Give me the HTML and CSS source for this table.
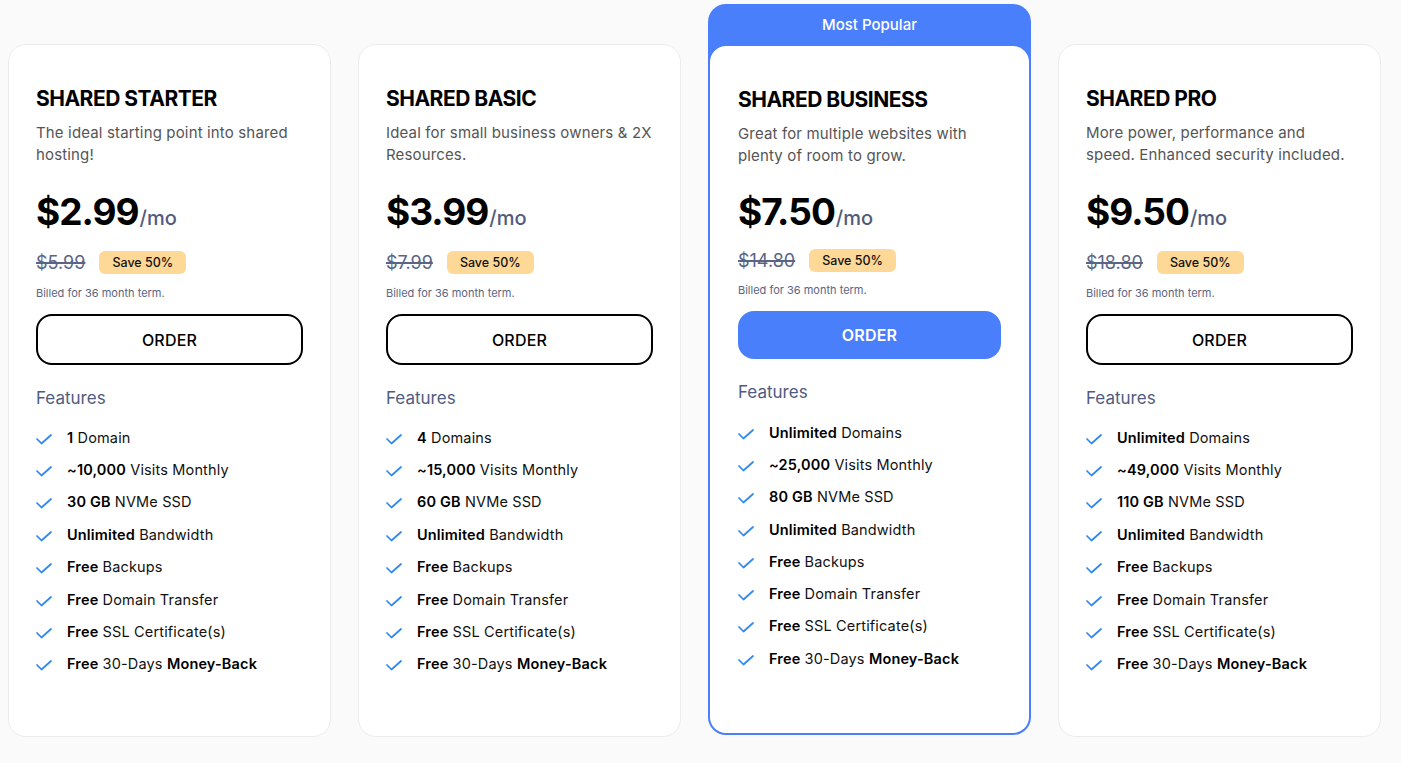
FILE: index.html
```html
<!DOCTYPE html>
<html>
<head>
<meta charset="utf-8">
<link rel="stylesheet" href="styles.css">
</head>
<body>
<div class="plans">
  <div class="card">
    <h2 class="title">SHARED STARTER</h2>
    <p class="desc">The ideal starting point into shared hosting!</p>
    <div class="price"><span class="amount">$2.99</span><span class="per">/mo</span></div>
    <div class="save-row"><span class="old">$5.99</span><span class="badge">Save 50%</span></div>
    <p class="billed">Billed for 36 month term.</p>
    <button class="order">ORDER</button>
    <h3 class="features-title">Features</h3>
    <ul class="features">
      <li><svg class="check" viewBox="0 0 16 11"><polyline points="1,5 5.5,9.5 15,1"/></svg><span><b>1</b> Domain</span></li>
      <li><svg class="check" viewBox="0 0 16 11"><polyline points="1,5 5.5,9.5 15,1"/></svg><span><b>~10,000</b> Visits Monthly</span></li>
      <li><svg class="check" viewBox="0 0 16 11"><polyline points="1,5 5.5,9.5 15,1"/></svg><span><b>30 GB</b> NVMe SSD</span></li>
      <li><svg class="check" viewBox="0 0 16 11"><polyline points="1,5 5.5,9.5 15,1"/></svg><span><b>Unlimited</b> Bandwidth</span></li>
      <li><svg class="check" viewBox="0 0 16 11"><polyline points="1,5 5.5,9.5 15,1"/></svg><span><b>Free</b> Backups</span></li>
      <li><svg class="check" viewBox="0 0 16 11"><polyline points="1,5 5.5,9.5 15,1"/></svg><span><b>Free</b> Domain Transfer</span></li>
      <li><svg class="check" viewBox="0 0 16 11"><polyline points="1,5 5.5,9.5 15,1"/></svg><span><b>Free</b> SSL Certificate(s)</span></li>
      <li><svg class="check" viewBox="0 0 16 11"><polyline points="1,5 5.5,9.5 15,1"/></svg><span><b>Free</b> 30-Days <b>Money-Back</b></span></li>
    </ul>
  </div>

  <div class="card">
    <h2 class="title">SHARED BASIC</h2>
    <p class="desc">Ideal for small business owners &amp; 2X Resources.</p>
    <div class="price"><span class="amount">$3.99</span><span class="per">/mo</span></div>
    <div class="save-row"><span class="old">$7.99</span><span class="badge">Save 50%</span></div>
    <p class="billed">Billed for 36 month term.</p>
    <button class="order">ORDER</button>
    <h3 class="features-title">Features</h3>
    <ul class="features">
      <li><svg class="check" viewBox="0 0 16 11"><polyline points="1,5 5.5,9.5 15,1"/></svg><span><b>4</b> Domains</span></li>
      <li><svg class="check" viewBox="0 0 16 11"><polyline points="1,5 5.5,9.5 15,1"/></svg><span><b>~15,000</b> Visits Monthly</span></li>
      <li><svg class="check" viewBox="0 0 16 11"><polyline points="1,5 5.5,9.5 15,1"/></svg><span><b>60 GB</b> NVMe SSD</span></li>
      <li><svg class="check" viewBox="0 0 16 11"><polyline points="1,5 5.5,9.5 15,1"/></svg><span><b>Unlimited</b> Bandwidth</span></li>
      <li><svg class="check" viewBox="0 0 16 11"><polyline points="1,5 5.5,9.5 15,1"/></svg><span><b>Free</b> Backups</span></li>
      <li><svg class="check" viewBox="0 0 16 11"><polyline points="1,5 5.5,9.5 15,1"/></svg><span><b>Free</b> Domain Transfer</span></li>
      <li><svg class="check" viewBox="0 0 16 11"><polyline points="1,5 5.5,9.5 15,1"/></svg><span><b>Free</b> SSL Certificate(s)</span></li>
      <li><svg class="check" viewBox="0 0 16 11"><polyline points="1,5 5.5,9.5 15,1"/></svg><span><b>Free</b> 30-Days <b>Money-Back</b></span></li>
    </ul>
  </div>

  <div class="popular">
    <div class="popular-label">Most Popular</div>
    <div class="card card-featured">
      <h2 class="title">SHARED BUSINESS</h2>
      <p class="desc">Great for multiple websites with plenty of room to grow.</p>
      <div class="price"><span class="amount">$7.50</span><span class="per">/mo</span></div>
      <div class="save-row"><span class="old">$14.80</span><span class="badge">Save 50%</span></div>
      <p class="billed">Billed for 36 month term.</p>
      <button class="order order-primary">ORDER</button>
      <h3 class="features-title">Features</h3>
      <ul class="features">
        <li><svg class="check" viewBox="0 0 16 11"><polyline points="1,5 5.5,9.5 15,1"/></svg><span><b>Unlimited</b> Domains</span></li>
        <li><svg class="check" viewBox="0 0 16 11"><polyline points="1,5 5.5,9.5 15,1"/></svg><span><b>~25,000</b> Visits Monthly</span></li>
        <li><svg class="check" viewBox="0 0 16 11"><polyline points="1,5 5.5,9.5 15,1"/></svg><span><b>80 GB</b> NVMe SSD</span></li>
        <li><svg class="check" viewBox="0 0 16 11"><polyline points="1,5 5.5,9.5 15,1"/></svg><span><b>Unlimited</b> Bandwidth</span></li>
        <li><svg class="check" viewBox="0 0 16 11"><polyline points="1,5 5.5,9.5 15,1"/></svg><span><b>Free</b> Backups</span></li>
        <li><svg class="check" viewBox="0 0 16 11"><polyline points="1,5 5.5,9.5 15,1"/></svg><span><b>Free</b> Domain Transfer</span></li>
        <li><svg class="check" viewBox="0 0 16 11"><polyline points="1,5 5.5,9.5 15,1"/></svg><span><b>Free</b> SSL Certificate(s)</span></li>
        <li><svg class="check" viewBox="0 0 16 11"><polyline points="1,5 5.5,9.5 15,1"/></svg><span><b>Free</b> 30-Days <b>Money-Back</b></span></li>
      </ul>
    </div>
  </div>

  <div class="card">
    <h2 class="title">SHARED PRO</h2>
    <p class="desc">More power, performance and speed. Enhanced security included.</p>
    <div class="price"><span class="amount">$9.50</span><span class="per">/mo</span></div>
    <div class="save-row"><span class="old">$18.80</span><span class="badge">Save 50%</span></div>
    <p class="billed">Billed for 36 month term.</p>
    <button class="order">ORDER</button>
    <h3 class="features-title">Features</h3>
    <ul class="features">
      <li><svg class="check" viewBox="0 0 16 11"><polyline points="1,5 5.5,9.5 15,1"/></svg><span><b>Unlimited</b> Domains</span></li>
      <li><svg class="check" viewBox="0 0 16 11"><polyline points="1,5 5.5,9.5 15,1"/></svg><span><b>~49,000</b> Visits Monthly</span></li>
      <li><svg class="check" viewBox="0 0 16 11"><polyline points="1,5 5.5,9.5 15,1"/></svg><span><b>110 GB</b> NVMe SSD</span></li>
      <li><svg class="check" viewBox="0 0 16 11"><polyline points="1,5 5.5,9.5 15,1"/></svg><span><b>Unlimited</b> Bandwidth</span></li>
      <li><svg class="check" viewBox="0 0 16 11"><polyline points="1,5 5.5,9.5 15,1"/></svg><span><b>Free</b> Backups</span></li>
      <li><svg class="check" viewBox="0 0 16 11"><polyline points="1,5 5.5,9.5 15,1"/></svg><span><b>Free</b> Domain Transfer</span></li>
      <li><svg class="check" viewBox="0 0 16 11"><polyline points="1,5 5.5,9.5 15,1"/></svg><span><b>Free</b> SSL Certificate(s)</span></li>
      <li><svg class="check" viewBox="0 0 16 11"><polyline points="1,5 5.5,9.5 15,1"/></svg><span><b>Free</b> 30-Days <b>Money-Back</b></span></li>
    </ul>
  </div>
</div>
</body>
</html>
```

FILE: styles.css
```css
* { box-sizing: border-box; }

html, body {
  margin: 0;
  padding: 0;
  background: #fafafa;
  font-family: "Inter", "Open Sans", sans-serif;
  color: #111;
}

.plans {
  display: flex;
  align-items: flex-start;
  gap: 27px;
  padding: 4px 0 0 8px;
}

.card {
  width: 323px;
  height: 693px;
  margin-top: 40px;
  background: #fff;
  border: 1px solid #ececef;
  border-radius: 18px;
  padding: 40px 27px 0 27px;
  display: flex;
  flex-direction: column;
}

.popular {
  width: 323px;
  height: 731px;
  background: #4a7ffb;
  border-radius: 18px;
  padding: 0 2px 2px 2px;
  display: flex;
  flex-direction: column;
}

.popular-label {
  height: 42px;
  line-height: 42px;
  text-align: center;
  color: #fff;
  font-size: 15px;
  font-weight: 500;
}

.card-featured {
  width: auto;
  flex: 1;
  margin-top: 0;
  border: none;
  border-radius: 16px;
  padding: 40px 28px 0 28px;
}

.title {
  margin: 0;
  font-size: 21px;
  line-height: 28px;
  font-weight: 700;
  letter-spacing: -0.5px;
  color: #000;
}

.desc {
  margin: 9px 0 0 0;
  font-size: 15px;
  line-height: 22px;
  letter-spacing: 0.15px;
  color: #555;
  font-weight: 400;
}

.price {
  margin-top: 22px;
  height: 48px;
  display: flex;
  align-items: baseline;
}

.amount {
  font-size: 37px;
  line-height: 48px;
  font-weight: 700;
  color: #000;
  letter-spacing: -1px;
}

.per {
  font-size: 20px;
  font-weight: 500;
  color: #4f5b7f;
  margin-left: 1px;
}

.save-row {
  margin-top: 14px;
  display: flex;
  align-items: center;
  gap: 14px;
  height: 24px;
}

.old {
  font-size: 18px;
  color: #5a6584;
  text-decoration: line-through;
  text-decoration-thickness: 1.5px;
}

.badge {
  background: #fed896;
  border-radius: 6px;
  font-size: 12.5px;
  font-weight: 500;
  color: #111;
  height: 23px;
  line-height: 23px;
  padding: 0 13px;
}

.billed {
  margin: 11px 0 0 0;
  font-size: 11px;
  line-height: 16px;
  color: #5a6584;
}

.order {
  margin-top: 13px;
  height: 51px;
  width: 100%;
  background: #fff;
  border: 2px solid #000;
  border-radius: 16px;
  font-family: inherit;
  font-size: 16px;
  font-weight: 500;
  letter-spacing: 0.2px;
  color: #000;
  cursor: pointer;
}

.order-primary {
  height: 48px;
  margin-top: 13px;
  background: #4a7ffb;
  border: none;
  color: #fff;
  font-weight: 600;
}

.features-title {
  margin: 21px 0 0 0;
  font-size: 17px;
  line-height: 24px;
  font-weight: 400;
  color: #4f5b7f;
}

.card-featured .features-title { margin-top: 21px; }
.card-featured .price { margin-top: 21px; }
.card-featured .save-row { margin-top: 12px; }
.card-featured .billed { margin-top: 10px; }

.features {
  list-style: none;
  margin: 11px 0 0 0;
  padding: 0;
}

.card-featured .features { margin-top: 12px; }

.features li {
  height: 32.4px;
  display: flex;
  align-items: center;
  font-size: 14.5px;
  letter-spacing: 0.15px;
  color: #111;
}

.card-featured .features li { height: 32.3px; }

.features b { font-weight: 600; color: #000; }

.check {
  width: 16px;
  height: 11px;
  margin-right: 15px;
  margin-top: 4px;
  flex: none;
  fill: none;
  stroke: #2d88f2;
  stroke-width: 1.7;
  stroke-linecap: round;
  stroke-linejoin: round;
}
```
